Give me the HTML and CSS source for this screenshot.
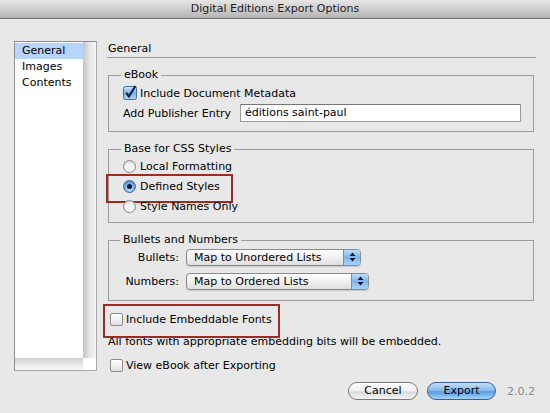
FILE: index.html
```html
<!DOCTYPE html>
<html>
<head>
<meta charset="utf-8">
<link rel="stylesheet" href="styles.css">
</head>
<body>
<div class="window">
  <div class="titlebar">Digital Editions Export Options</div>
  <div class="content">
    <div class="sidebar">
      <ul class="list">
        <li class="sel">General</li>
        <li>Images</li>
        <li>Contents</li>
      </ul>
      <div class="vshade"></div>
      <div class="hshade"></div>
      <div class="corner"></div>
    </div>
    <div class="panel">
      <div class="panel-title">General</div>

      <fieldset class="group ebook">
        <legend>eBook</legend>
        <div class="row">
          <svg class="cb-checked" width="14" height="15" viewBox="0 0 14 15"><defs><linearGradient id="cbg" x1="0" y1="0" x2="0" y2="1"><stop offset="0" stop-color="#d2e7fb"/><stop offset=".5" stop-color="#76afe8"/><stop offset="1" stop-color="#b4dafc"/></linearGradient></defs><rect x=".5" y="1.5" width="13" height="13" rx="2" fill="url(#cbg)" stroke="#4a6a94"/><path d="M3.2 7.8 L6 11.4 L12.4 1" fill="none" stroke="#16213d" stroke-width="2.1"/></svg>
          <span>Include Document Metadata</span>
        </div>
        <div class="row publisher">
          <span>Add Publisher Entry</span>
          <div class="textfield">éditions saint-paul</div>
        </div>
      </fieldset>

      <fieldset class="group css">
        <legend>Base for CSS Styles</legend>
        <div class="radio-row"><span class="radio"></span><span>Local Formatting</span></div>
        <div class="radio-row highlight"><span class="radio on"></span><span>Defined Styles</span></div>
        <div class="radio-row"><span class="radio"></span><span>Style Names Only</span></div>
      </fieldset>

      <fieldset class="group bullets">
        <legend>Bullets and Numbers</legend>
        <div class="select-row">
          <span class="sel-label">Bullets:</span>
          <div class="popup w-bullets"><span class="popup-text">Map to Unordered Lists</span><span class="popup-arrows"><svg width="7" height="10" viewBox="0 0 7 10"><path d="M3.5 0.5 L6.5 4 L0.5 4 Z M0.5 6 L6.5 6 L3.5 9.5 Z" fill="#0f1a33"/></svg></span></div>
        </div>
        <div class="select-row">
          <span class="sel-label">Numbers:</span>
          <div class="popup w-numbers"><span class="popup-text">Map to Ordered Lists</span><span class="popup-arrows"><svg width="7" height="10" viewBox="0 0 7 10"><path d="M3.5 0.5 L6.5 4 L0.5 4 Z M0.5 6 L6.5 6 L3.5 9.5 Z" fill="#0f1a33"/></svg></span></div>
        </div>
      </fieldset>

      <div class="check-row embed highlight2"><span class="cb"></span><span>Include Embeddable Fonts</span></div>
      <div class="note">All fonts with appropriate embedding bits will be embedded.</div>
      <div class="check-row view"><span class="cb"></span><span>View eBook after Exporting</span></div>

      <div class="buttons">
        <div class="btn">Cancel</div>
        <div class="btn primary">Export</div>
        <span class="version">2.0.2</span>
      </div>
    </div>
  </div>
</div>
</body>
</html>
```

FILE: styles.css
```css
* { box-sizing: border-box; }
html, body { margin: 0; padding: 0; }
body {
  width: 550px;
  height: 413px;
  overflow: hidden;
  background: #e8e8e8;
  font-family: "DejaVu Sans", "Liberation Sans", sans-serif;
  font-size: 11px;
  color: #000;
}
.window { width: 550px; height: 413px; background: #e8e8e8; }
.titlebar {
  height: 19px;
  line-height: 18px;
  text-align: center;
  font-size: 11px;
  color: #1c1c1c;
  background: linear-gradient(#e6e6e6, #c9c9c9 60%, #b4b4b4);
  border-bottom: 1px solid #6f6f6f;
}
.content {
  display: flex;
  padding: 22px 0 0 14px;
}
.sidebar {
  width: 83px;
  height: 330px;
  border: 1px solid #8e8e8e;
  border-right-color: #a8a8a8;
  border-bottom-color: #a8a8a8;
  background: #fff;
  display: grid;
  grid-template-columns: 68px 13px;
  grid-template-rows: 316px 12px;
}
.list {
  list-style: none;
  margin: 0;
  padding: 1px 0 0 0;
  background: #fff;
}
.list li {
  height: 16px;
  line-height: 16px;
  padding-left: 7px;
}
.list li.sel { background: #b5d5ff; }
.vshade { background: linear-gradient(90deg, #c4c4c4, #e6e6e6 50%, #f4f4f4); }
.hshade { background: linear-gradient(#cfcfcf, #ececec 60%, #f6f6f6); }
.corner { background: #fff; }

.panel {
  width: 429px;
  margin-left: 10px;
  display: flex;
  flex-direction: column;
}
.panel-title {
  height: 17px;
  line-height: 16px;
  padding-left: 1px;
  border-bottom: 1px solid #9a9a9a;
}
.group {
  margin: 10px 2px 0 1px;
  border: 1px solid #9c9c9c;
  padding: 0 12px 0 14px;
  min-width: 0;
}
.group legend {
  line-height: 14px;
  padding: 0 3px;
  margin-left: -2px;
}
.row {
  display: flex;
  align-items: center;
}
.ebook { padding-bottom: 9px; }
.ebook .row:first-of-type { height: 16px; margin-top: 3px; }
.cb-checked { margin-right: 3px; margin-top: -2px; }
.publisher { margin-top: 3px; height: 18px; }
.textfield {
  margin-left: auto;
  width: 281px;
  height: 18px;
  line-height: 16px;
  padding-left: 4px;
  background: #fff;
  border: 1px solid #9a9a9a;
  border-top-color: #777;
}

.css { padding-bottom: 6px; }
.radio-row {
  height: 20px;
  display: flex;
  align-items: center;
  position: relative;
}
.radio {
  width: 13px;
  height: 13px;
  border-radius: 50%;
  border: 1px solid #8a8a8a;
  background: radial-gradient(circle at 50% 70%, #ffffff, #f2f2f2 50%, #cfcfcf);
  margin-right: 4px;
}
.radio.on {
  border-color: #3d5f91;
  background: radial-gradient(circle at 50% 75%, #c2e1ff, #6aa6e5 60%, #4b86cb);
  display: flex;
  align-items: center;
  justify-content: center;
}
.radio.on::after {
  content: "";
  width: 5px;
  height: 5px;
  border-radius: 50%;
  background: #111a2e;
}
.highlight::after {
  content: "";
  position: absolute;
  left: -17px;
  top: -2px;
  width: 123px;
  height: 25px;
  border: 2px solid #9e2b22;
}

.bullets { padding: 0 12px 9px 13px; }
.select-row {
  display: flex;
  align-items: center;
  height: 20px;
  margin-bottom: 4px;
}
.select-row:last-child { margin-bottom: 0; }
.sel-label {
  width: 57px;
  text-align: right;
  margin-right: 7px;
}
.popup {
  height: 17px;
  display: flex;
  border: 1px solid #8a8a8a;
  border-radius: 4px;
  background: linear-gradient(#ffffff, #f1f1f1 50%, #dedede);
  box-shadow: 0 1px 1px rgba(0,0,0,0.15);
  overflow: hidden;
}
.w-bullets { width: 175px; }
.w-numbers { width: 183px; }
.popup-text {
  flex: 1;
  line-height: 15px;
  padding-left: 7px;
}
.popup-arrows {
  width: 17px;
  border-left: 1px solid #6e8fbd;
  background: linear-gradient(#bcdcfb, #7eb5ec 50%, #a9d5fc);
  display: flex;
  align-items: center;
  justify-content: center;
}

.check-row {
  display: flex;
  align-items: center;
  height: 20px;
  padding-left: 3px;
  position: relative;
}
.embed { margin-top: 8px; }
.cb {
  width: 13px;
  height: 13px;
  border: 1px solid #8c8c8c;
  border-radius: 2px;
  background: linear-gradient(#ffffff, #f3f3f3 50%, #dcdcdc);
  margin-right: 3px;
}
.highlight2::after {
  content: "";
  position: absolute;
  left: -4px;
  top: -5px;
  width: 173px;
  height: 30px;
  border: 2px solid #9e2b22;
}
.note {
  margin-top: 5px;
  line-height: 16px;
  padding-left: 1px;
}
.view { margin-top: 5px; }

.buttons {
  display: flex;
  align-items: center;
  justify-content: flex-end;
  margin-top: 7px;
  padding-right: 1px;
}
.btn {
  height: 18px;
  line-height: 16px;
  text-align: center;
  border-radius: 9px;
  border: 1px solid #7a7a7a;
  background: linear-gradient(#ffffff, #f0f0f0 50%, #dadada 55%, #f4f4f4);
  width: 70px;
  margin-right: 9px;
}
.btn.primary {
  width: 69px;
  border-color: #3a5e95;
  background: linear-gradient(#c4e0fb, #87bdf0 45%, #5b9ce4 55%, #a5d3fb);
  margin-right: 11px;
}
.version { color: #8a8a8a; }
```
